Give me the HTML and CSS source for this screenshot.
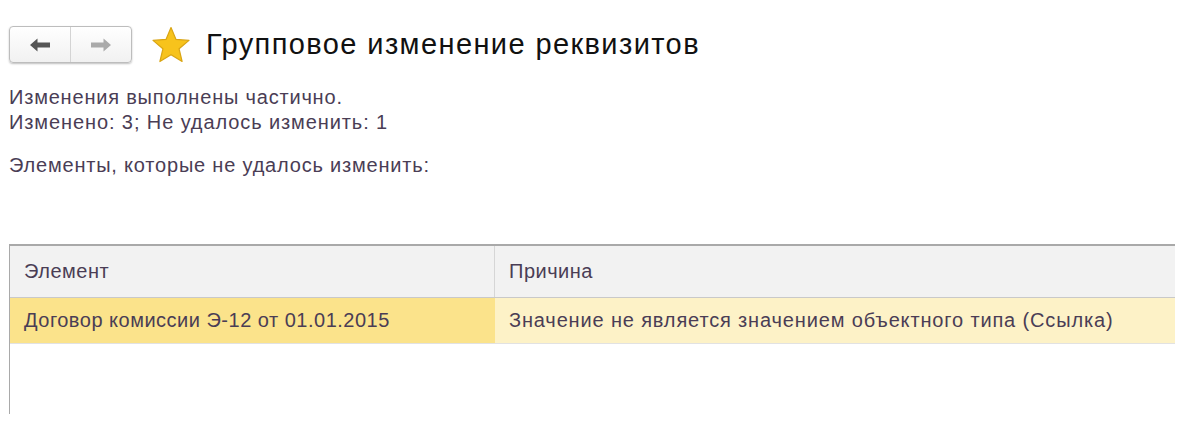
FILE: index.html
```html
<!DOCTYPE html>
<html lang="ru">
<head>
<meta charset="utf-8">
<title>Групповое изменение реквизитов</title>
<link rel="stylesheet" href="styles.css">
</head>
<body>
<div class="page">
  <div class="titlebar">
    <div class="nav">
      <span class="nav-btn">
        <svg width="22" height="16" viewBox="0 0 22 16"><path d="M1 8 L8.5 1.5 L8.5 5.5 L21 5.5 L21 10.5 L8.5 10.5 L8.5 14.5 Z" fill="#555"/></svg>
      </span>
      <span class="nav-btn">
        <svg width="22" height="16" viewBox="0 0 22 16"><path d="M21 8 L13.5 1.5 L13.5 5.5 L1 5.5 L1 10.5 L13.5 10.5 L13.5 14.5 Z" fill="#aaa"/></svg>
      </span>
    </div>
    <svg class="star" width="40" height="38" viewBox="0 0 40 38"><path d="M20 1.5 L25 13.4 L38 14.4 L28.1 22.8 L31.1 35.5 L20 28.7 L8.9 35.5 L11.9 22.8 L2 14.4 L15 13.4 Z" fill="#f7c31c" stroke="#d9a514" stroke-width="1.2" stroke-linejoin="round"/></svg>
    <h1 class="title">Групповое изменение реквизитов</h1>
  </div>
  <div class="status">
    <div>Изменения выполнены частично.</div>
    <div class="wide">Изменено: 3; Не удалось изменить: 1</div>
  </div>
  <div class="caption">Элементы, которые не удалось изменить:</div>
  <div class="table">
    <div class="thead">
      <div class="cell c1">Элемент</div>
      <div class="cell c2">Причина</div>
    </div>
    <div class="row">
      <div class="cell c1 cur">Договор комиссии Э-12 от 01.01.2015</div>
      <div class="cell c2">Значение не является значением объектного типа (Ссылка)</div>
    </div>
  </div>
</div>
</body>
</html>
```

FILE: styles.css
```css
html, body {
  margin: 0;
  padding: 0;
  background: #ffffff;
}
body {
  font-family: "Liberation Sans", Arial, sans-serif;
  color: #4a3d55;
  font-size: 20px;
}
.page {
  padding: 0 0 0 9px;
}
.titlebar {
  display: flex;
  align-items: center;
  height: 37px;
  margin-top: 26px;
}
.nav {
  display: flex;
  width: 123px;
  height: 37px;
  box-sizing: border-box;
  border: 1px solid #bdbdbd;
  border-radius: 4px;
  background: linear-gradient(#ffffff, #f1f1f1);
  box-shadow: 0 1px 2px rgba(0,0,0,0.25);
}
.nav-btn {
  flex: 1;
  display: flex;
  align-items: center;
  justify-content: center;
}
.nav-btn + .nav-btn {
  border-left: 1px solid #d4d4d4;
}
.star {
  margin-left: 19px;
}
.title {
  margin: 0 0 0 15px;
  font-weight: normal;
  font-size: 29px;
  letter-spacing: 1.4px;
  color: #111111;
  line-height: 37px;
}
.status {
  margin-top: 22px;
  line-height: 25px;
  letter-spacing: 0.8px;
}
.status .wide {
  letter-spacing: 0.9px;
}
.caption {
  margin-top: 18px;
  line-height: 25px;
  letter-spacing: 0.8px;
}
.table {
  margin-top: 66px;
  width: 1166px;
  height: 170px;
  border-top: 2px solid #a9a9a9;
  border-left: 1px solid #a9a9a9;
  box-sizing: border-box;
  letter-spacing: 0.5px;
}
.thead {
  display: flex;
  height: 52px;
  background: #f2f2f2;
  border-bottom: 1px solid #c9c9c9;
  box-sizing: border-box;
}
.row {
  display: flex;
  height: 46px;
  background: #fdf2c7;
  border-bottom: 1px solid #e2e2e2;
  box-sizing: border-box;
}
.cell {
  display: flex;
  align-items: center;
  padding-left: 14px;
  box-sizing: border-box;
}
.c1 {
  width: 485px;
  border-right: 1px solid #d6d6d6;
}
.row .c1 {
  border-right: none;
}
.c2 {
  flex: 1;
}
.row .c2 {
  letter-spacing: 0.85px;
}
.cur {
  background: #fbe38b;
}
```
